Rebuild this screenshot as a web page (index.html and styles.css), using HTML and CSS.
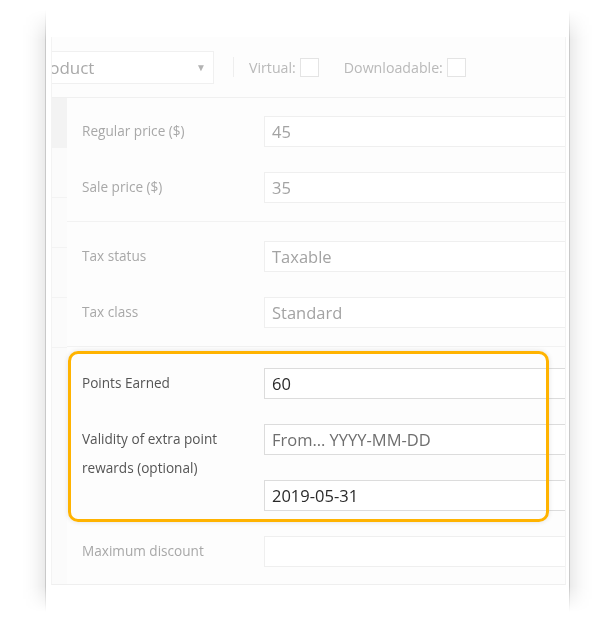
FILE: index.html
```html
<!DOCTYPE html>
<html>
<head>
<meta charset="utf-8">
<link rel="stylesheet" href="styles.css">
</head>
<body>
<div class="stage">
  <div class="fade">
    <div class="card">
      <div class="inner">
        <div class="head">
          <div class="select"><span class="sel-text">Product</span><span class="arrow">▼</span></div>
          <div class="vdiv"></div>
          <div class="chk">Virtual:<span class="box"></span></div>
          <div class="chk">Downloadable:<span class="box"></span></div>
        </div>
        <div class="body">
          <ul class="tabs">
            <li class="active"></li><li></li><li></li><li></li><li></li>
          </ul>
          <div class="panel">
            <div class="group">
              <div class="row"><div class="label">Regular price ($)</div><div class="fields"><div class="input">45</div></div></div>
              <div class="row"><div class="label">Sale price ($)</div><div class="fields"><div class="input">35</div></div></div>
            </div>
            <div class="group">
              <div class="row"><div class="label">Tax status</div><div class="fields"><div class="input">Taxable</div></div></div>
              <div class="row"><div class="label">Tax class</div><div class="fields"><div class="input">Standard</div></div></div>
            </div>
            <div class="group group-last">
              <div class="frame"></div>
              <div class="row hl"><div class="label">Points Earned</div><div class="fields"><div class="input">60</div></div></div>
              <div class="row hl"><div class="label">Validity of extra point rewards (optional)</div><div class="fields"><div class="input placeholder">From… YYYY-MM-DD</div><div class="input">2019-05-31</div></div></div>
              <div class="row"><div class="label">Maximum discount</div><div class="fields"><div class="input"></div></div></div>
            </div>
          </div>
        </div>
      </div>
    </div>
  </div>
</div>
</body>
</html>
```
FILE: styles.css
```css
html, body {
  margin: 0;
  padding: 0;
  background: #fff;
}
body {
  font-family: "Open Sans", "Noto Sans", sans-serif;
  width: 600px;
  height: 635px;
  overflow: hidden;
}
.stage {
  padding-left: 15px;
}
.fade {
  width: 525px;
  padding: 0 30px;
  height: 635px;
  -webkit-mask-image: linear-gradient(to bottom, transparent 0, transparent 10px, #000 40px, #000 586px, transparent 612px);
  mask-image: linear-gradient(to bottom, transparent 0, transparent 10px, #000 40px, #000 586px, transparent 612px);
}
.card {
  box-sizing: border-box;
  width: 525px;
  height: 660px;
  padding-top: 37px;
  background: #fff;
  border-left: 1px solid #c9c9c9;
  border-right: 1px solid #c9c9c9;
  box-shadow: 0 0 22px rgba(0, 0, 0, 0.16);
}
.inner {
  margin-left: 5px;
  width: 513px;
  border-left: 1px solid #f3f3f3;
  border-right: 1px solid #f3f3f3;
  border-bottom: 1px solid #efefef;
  overflow: hidden;
  background: #fdfdfd;
}
.head {
  height: 60px;
  display: flex;
  align-items: center;
  border-bottom: 1px solid #f0f0f0;
  background: #fdfdfd;
}
.select {
  flex: none;
  box-sizing: border-box;
  margin-left: -40px;
  width: 202px;
  height: 33px;
  border: 1px solid #f0f0f0;
  background: #fff;
  display: flex;
  align-items: center;
  justify-content: space-between;
  padding: 0 7px 0 19px;
  color: #a9a9a9;
  font-size: 17px;
}
.arrow {
  font-size: 10px;
  color: #b3b3b3;
}
.vdiv {
  flex: none;
  width: 1px;
  height: 20px;
  background: #eee;
  margin: 0 15px 0 19px;
}
.chk {
  display: flex;
  align-items: center;
  gap: 4px;
  font-size: 14.2px;
  color: #b9b9b9;
  margin-right: 25px;
}
.box {
  display: inline-block;
  box-sizing: border-box;
  width: 19px;
  height: 19px;
  border: 1px solid #e4e4e4;
  background: #fff;
}
.body {
  display: flex;
}
.tabs {
  list-style: none;
  margin: 0;
  padding: 0;
  width: 15px;
  flex: none;
  background: #fbfbfb;
}
.tabs li {
  height: 49px;
  border-bottom: 1px solid #f3f3f3;
}
.tabs li.active {
  background: #f3f3f3;
}
.panel {
  flex: 1;
  background: #fdfdfd;
}
.group {
  position: relative;
  padding: 18px 0 18px;
  display: flex;
  flex-direction: column;
  gap: 25px;
  border-bottom: 1px solid #f2f2f2;
}
.group + .group {
  padding-top: 19px;
}
.group-last {
  padding-top: 21px !important;
  padding-bottom: 17px;
  border-bottom: none;
}
.row {
  display: flex;
}
.label {
  flex: none;
  box-sizing: border-box;
  width: 197px;
  padding: 0 20px 0 15px;
  font-size: 13.6px;
  line-height: 29px;
  color: #a8a8a8;
}
.fields {
  flex: 1;
  display: flex;
  flex-direction: column;
  gap: 25px;
}
.input {
  box-sizing: border-box;
  height: 31px;
  border: 1px solid #efefef;
  border-right: none;
  background: #fff;
  padding: 0 7px;
  font-size: 16.5px;
  line-height: 29px;
  color: #a3a3a3;
}
.hl .label {
  color: #555;
}
.hl .input {
  border-color: #dcdcdc;
  color: #2a2a2a;
}
.hl .input.placeholder {
  color: #6f6f6f;
}
.frame {
  position: absolute;
  left: 1px;
  top: 4px;
  width: 481px;
  height: 171px;
  box-sizing: border-box;
  border: 3px solid #ffb300;
  border-radius: 10px;
  box-shadow: 0 0 5px rgba(0, 0, 0, 0.12);
  pointer-events: none;
}
```
